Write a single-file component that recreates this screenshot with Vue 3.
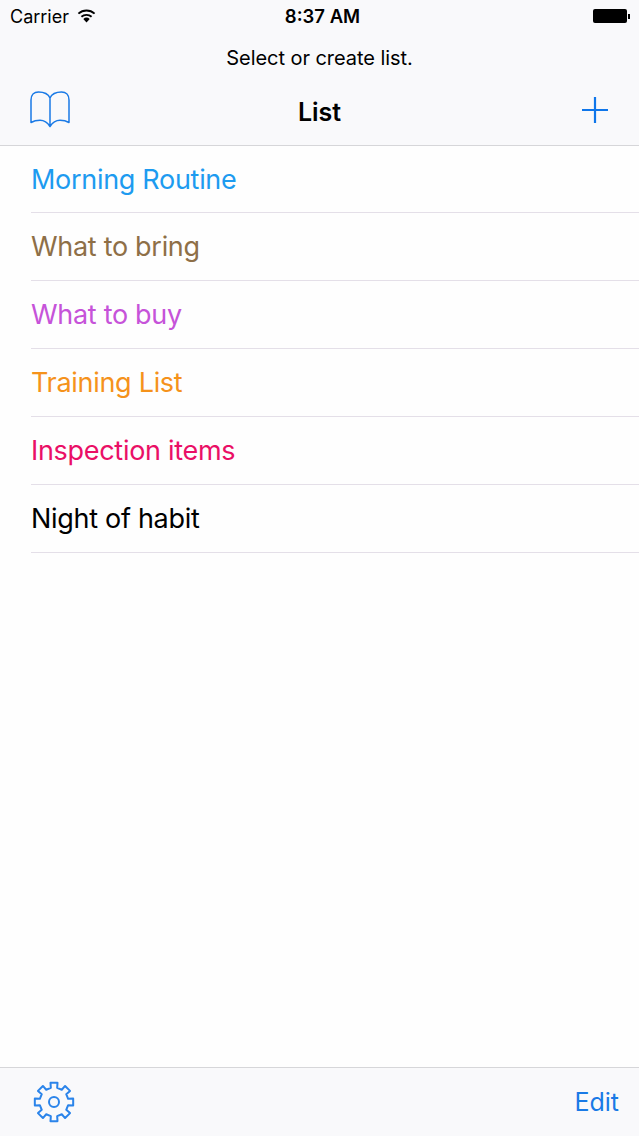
<script setup>
const lists = [
  { name: 'Morning Routine', color: '#1d9bf0' },
  { name: 'What to bring', color: '#8e6f47' },
  { name: 'What to buy', color: '#c653d9' },
  { name: 'Training List', color: '#f5921b' },
  { name: 'Inspection items', color: '#ea0f66' },
  { name: 'Night of habit', color: '#000000' }
]

// gear outline, 8 teeth
function gearPath() {
  const cx = 21, cy = 21, teeth = 8
  const pts = []
  for (let i = 0; i < teeth; i++) {
    const a = (i * Math.PI * 2) / teeth - Math.PI / 2
    const step = Math.PI / teeth
    const add = (r, o) => {
      pts.push((cx + r * Math.cos(a + o)).toFixed(2) + ' ' + (cy + r * Math.sin(a + o)).toFixed(2))
    }
    add(14.5, -step * 0.56)
    add(19.5, -step * 0.46)
    add(19.5, step * 0.46)
    add(14.5, step * 0.56)
  }
  return 'M' + pts.join('L') + 'Z'
}
const gear = gearPath()
</script>

<template>
  <div class="screen">
    <header class="topBar">
      <div class="statusBar">
        <div class="statusLeft">
          <span>Carrier</span>
          <svg class="wifi" width="19" height="14" viewBox="0 0 19 14">
            <path d="M9.5 13.5 L6.3 9.9 A4.8 4.8 0 0 1 12.7 9.9 Z" fill="#000" />
            <path d="M4.4 7.8 A7.6 7.6 0 0 1 14.6 7.8" fill="none" stroke="#000" stroke-width="1.9" />
            <path d="M1.4 4.6 A12 12 0 0 1 17.6 4.6" fill="none" stroke="#000" stroke-width="1.9" />
          </svg>
        </div>
        <div class="clock">8:37 AM</div>
        <div class="battery"><span class="batteryBody"></span><span class="batteryTip"></span></div>
      </div>
      <div class="prompt">Select or create list.</div>
      <div class="navBar">
        <svg class="navIcon" width="42" height="40" viewBox="0 0 42 40">
          <path
            d="M21 36.5 V8 C19 3.500 14 2 9.500 2 C5 2 2 5 2 10 V32.500 C5 30.800 8 30.300 11 30.300 C15 30.300 18.500 32.500 21 36.500 C23.500 32.500 27 30.300 31 30.300 C34 30.300 37 30.800 40 32.500 V10 C40 5 37 2 32.500 2 C28 2 23 3.500 21 8"
            fill="none" stroke="#1a7ae6" stroke-width="1.5" stroke-linejoin="round" />
        </svg>
        <div class="navTitle">List</div>
        <svg class="navIcon" width="28" height="28" viewBox="0 0 28 28">
          <path d="M14 1 V27 M1 14 H27" stroke="#0f76ea" stroke-width="2.200" fill="none" />
        </svg>
      </div>
    </header>

    <main class="listArea">
      <div v-for="item in lists" :key="item.name" class="row">
        <div class="rowInner" :style="{ color: item.color }">{{ item.name }}</div>
      </div>
    </main>

    <footer class="bottomBar">
      <svg class="gearIcon" width="42" height="42" viewBox="0 0 42 42">
        <path :d="gear" fill="none" stroke="#2b84ea" stroke-width="2" stroke-linejoin="round" />
        <circle cx="21" cy="21" r="5" fill="none" stroke="#2b84ea" stroke-width="2" />
      </svg>
      <span class="editBtn">Edit</span>
    </footer>
  </div>
</template>

<style>
html, body {
  margin: 0;
  background: #fff;
}
</style>

<style scoped>
.screen {
  width: 639px;
  height: 1136px;
  display: flex;
  flex-direction: column;
  font-family: Inter, "Liberation Sans", sans-serif;
  color: #000;
  background: #fefefe;
  overflow: hidden;
}
.topBar {
  height: 146px;
  box-sizing: border-box;
  background: #f9f9fb;
  border-bottom: 1px solid #d6d6d9;
  display: flex;
  flex-direction: column;
}
.statusBar {
  height: 32px;
  padding: 0 9px 0 10px;
  display: flex;
  align-items: center;
  justify-content: space-between;
  position: relative;
  font-size: 18px;
}
.statusLeft {
  display: flex;
  align-items: center;
  gap: 8px;
}
.clock {
  position: absolute;
  left: 6px;
  right: 0;
  text-align: center;
  font-size: 18.5px;
  font-weight: 600;
}
.battery {
  display: flex;
  align-items: center;
}
.batteryBody {
  width: 34px;
  height: 14px;
  background: #000;
  border-radius: 2px;
}
.batteryTip {
  width: 2px;
  height: 5px;
  background: #000;
  margin-left: 1px;
}
.prompt {
  height: 52px;
  display: flex;
  align-items: center;
  justify-content: center;
  font-size: 20px;
  letter-spacing: -0.05px;
}
.navBar {
  flex: 1;
  padding: 0 30px 6px 29px;
  display: flex;
  align-items: center;
  justify-content: space-between;
  position: relative;
}
.navIcon {
  margin-bottom: 4px;
}
.navTitle {
  position: absolute;
  left: 0;
  right: 0;
  text-align: center;
  font-size: 25px;
  font-weight: 600;
}
.listArea {
  flex: 1;
}
.row {
  height: 68px;
  padding-left: 31px;
}
.row:first-child {
  height: 67px;
}
.rowInner {
  height: 100%;
  box-sizing: border-box;
  border-bottom: 1px solid #e4dfe8;
  display: flex;
  align-items: center;
  font-size: 27px;
  letter-spacing: -0.3px;
}
.bottomBar {
  height: 69px;
  box-sizing: border-box;
  background: #f9f9fb;
  border-top: 1px solid #d6d6d9;
  padding: 0 20px 0 33px;
  display: flex;
  align-items: center;
  justify-content: space-between;
}
.editBtn {
  font-size: 25px;
  color: #1a7ae6;
}
</style>
